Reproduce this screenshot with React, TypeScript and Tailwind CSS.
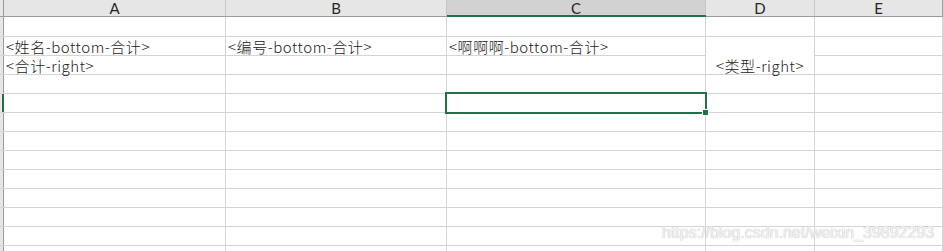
import React from "react";

const cols = [
  { key: "A", w: "w-[222px]" },
  { key: "B", w: "w-[221px]" },
  { key: "C", w: "w-[259px]" },
  { key: "D", w: "w-[109px]" },
  { key: "E", w: "w-[128px]" },
];

const cellFont = { fontFamily: '"Noto Sans CJK SC", "Noto Sans", sans-serif' };

function Cell({ w, children, className = "" }: { w: string; children?: React.ReactNode; className?: string }) {
  return (
    <div
      className={`${w} h-full shrink-0 border-r border-[#d4d4d4] flex items-end overflow-visible whitespace-nowrap text-[15px] leading-[17px] font-light tracking-[0.55px] text-[#1a1a1a] pl-[2px] ${className}`}
      style={cellFont}
    >
      {children}
    </div>
  );
}

function RowHead({ selected = false }: { selected?: boolean }) {
  return (
    <div className="w-[4px] h-full shrink-0 bg-[#e6e6e6] border-r border-[#9b9b9b] relative">
      {selected && <div className="absolute left-[2px] top-0 bottom-0 w-[2px] bg-[#217346]" />}
    </div>
  );
}

function Row({ h, children, selected = false }: { h: string; children?: React.ReactNode; selected?: boolean }) {
  return (
    <div className={`flex ${h} border-b border-[#d4d4d4]`}>
      <RowHead selected={selected} />
      {children}
    </div>
  );
}

export default function App() {
  const emptyRows = Array.from({ length: 8 });
  return (
    <div className="w-[943px] h-[251px] bg-white overflow-hidden relative">
      {/* Header */}
      <div className="flex h-[17px] bg-[#e6e6e6] border-b border-[#9b9b9b]">
        <div className="w-[4px] h-full shrink-0 border-r border-[#9b9b9b]" />
        {cols.map((c) => (
          <div
            key={c.key}
            className={`${c.w} h-full shrink-0 border-r ${c.key === "E" ? "border-[#9b9b9b]" : "border-[#c6c6c6]"} flex items-center justify-center text-[15px] leading-none text-[#262626] relative ${c.key === "C" ? "bg-[#d2d2d2] text-[#1e5e3b]" : ""}`}
            style={{ fontFamily: "Lato, 'Liberation Sans', sans-serif" }}
          >
            {c.key}
            {c.key === "C" && <div className="absolute left-0 right-[-1px] bottom-[-1px] h-[2px] bg-[#217346]" />}
          </div>
        ))}
      </div>

      {/* Row 1 */}
      <Row h="h-[20px]">
        {cols.map((c) => (
          <Cell key={c.key} w={c.w} />
        ))}
      </Row>

      {/* Rows 2-3 with merged D */}
      <div className="flex">
        <div className="flex flex-col">
          <Row h="h-[19px]">
            <Cell w="w-[222px]">&lt;姓名-bottom-合计&gt;</Cell>
            <Cell w="w-[221px]">&lt;编号-bottom-合计&gt;</Cell>
            <Cell w="w-[259px]">&lt;啊啊啊-bottom-合计&gt;</Cell>
          </Row>
          <Row h="h-[19px]">
            <Cell w="w-[222px]">&lt;合计-right&gt;</Cell>
            <Cell w="w-[221px]" />
            <Cell w="w-[259px]" />
          </Row>
        </div>
        <div
          className="w-[109px] h-[38px] shrink-0 border-r border-b border-[#d4d4d4] flex items-end justify-center whitespace-nowrap text-[15px] leading-[17px] font-light tracking-[0.55px] text-[#1a1a1a]"
          style={cellFont}
        >
          &lt;类型-right&gt;
        </div>
        <div className="flex flex-col">
          <div className="w-[128px] h-[19px] border-r border-b border-[#d4d4d4]" />
          <div className="w-[128px] h-[19px] border-r border-b border-[#d4d4d4]" />
        </div>
      </div>

      {/* Row 4 */}
      <Row h="h-[19px]">
        {cols.map((c) => (
          <Cell key={c.key} w={c.w} />
        ))}
      </Row>

      {/* Row 5 (selected) */}
      <Row h="h-[19px]" selected>
        {cols.map((c) => (
          <Cell key={c.key} w={c.w} />
        ))}
      </Row>

      {emptyRows.map((_, i) => (
        <Row key={i} h="h-[19px]">
          {cols.map((c) => (
            <Cell key={c.key} w={c.w} />
          ))}
        </Row>
      ))}

      {/* Selection box */}
      <div className="absolute left-[445px] top-[92px] w-[262px] h-[22px] border-2 border-[#217346] pointer-events-none" />
      <div className="absolute left-[702px] top-[109px] w-[7px] h-[7px] bg-[#217346] border border-white" />

      {/* Watermark */}
      <div
        className="absolute left-[662px] top-[221px] text-[16px] text-[#f4f4f4] whitespace-nowrap"
        style={{ fontFamily: "Arial, 'Liberation Sans', sans-serif", textShadow: "0 0 1px #a0a0a0" }}
      >
        https://blog.csdn.net/weixin_39892293
      </div>
    </div>
  );
}
